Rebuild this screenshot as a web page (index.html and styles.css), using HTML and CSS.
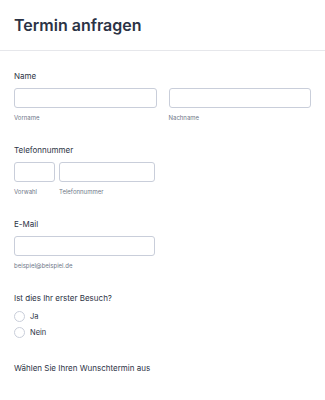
FILE: index.html
```html
<!DOCTYPE html>
<html lang="de">

<head>
    <meta charset="UTF-8">
    <meta name="viewport" content="width=device-width, initial-scale=1.0">
    <title>Termin anfragen</title>
    <link rel="stylesheet" href="styles.css">
</head>

<body>
    <div class="header">
        <h1>Termin anfragen</h1>
    </div>

    <form class="form">
        <div class="field">
            <label class="label">Name</label>
            <div class="row">
                <div class="col">
                    <input type="text" class="input">
                    <span class="sublabel">Vorname</span>
                </div>
                <div class="col">
                    <input type="text" class="input">
                    <span class="sublabel">Nachname</span>
                </div>
            </div>
        </div>

        <div class="field">
            <label class="label">Telefonnummer</label>
            <div class="row phone">
                <div class="col area">
                    <input type="text" class="input">
                    <span class="sublabel">Vorwahl</span>
                </div>
                <div class="col number">
                    <input type="text" class="input">
                    <span class="sublabel">Telefonnummer</span>
                </div>
            </div>
        </div>

        <div class="field">
            <label class="label">E-Mail</label>
            <div class="col email">
                <input type="email" class="input">
                <span class="sublabel">beispiel@beispiel.de</span>
            </div>
        </div>

        <div class="field radios">
            <label class="label">Ist dies Ihr erster Besuch?</label>
            <div class="option"><span class="radio"></span>Ja</div>
            <div class="option"><span class="radio"></span>Nein</div>
        </div>

        <div class="field">
            <label class="label">Wählen Sie Ihren Wunschtermin aus</label>
        </div>
    </form>
</body>

</html>
```

FILE: styles.css
```css
body {
    font-family: Inter, "Noto Sans", sans-serif;
    background-color: #fff;
    color: #2c3345;
    margin: 0;
    padding: 0;
}

.header {
    padding: 13px 14px;
    border-bottom: 1px solid #e6e7eb;
}

h1 {
    margin: 0;
    font-size: 16px;
    line-height: 24px;
    font-weight: 600;
    color: #2c3345;
}

.form {
    padding: 19px 14px 0 14px;
}

.field {
    margin-bottom: 21px;
}

.label {
    display: block;
    font-size: 8px;
    line-height: 12px;
    font-weight: 400;
    margin-bottom: 6px;
}

.row {
    display: flex;
    gap: 12px;
}

.col {
    display: flex;
    flex-direction: column;
    flex: 1;
}

.phone {
    gap: 4px;
    width: 141px;
}

.phone .area {
    flex: 0 0 41px;
}

.email {
    width: 141px;
}

.input {
    box-sizing: border-box;
    height: 20px;
    width: 100%;
    margin: 0;
    padding: 0 6px;
    border: 1px solid #c9ceda;
    border-radius: 3px;
    background: #fff;
}

.sublabel {
    margin-top: 4px;
    font-size: 6px;
    line-height: 11px;
    color: #6f7889;
}

.radios {
    margin-bottom: 22px;
}

.radios .label {
    margin-bottom: 4px;
}

.option {
    display: flex;
    align-items: center;
    gap: 5px;
    height: 16px;
    font-size: 7.5px;
}

.radio {
    box-sizing: border-box;
    width: 11px;
    height: 11px;
    border: 1px solid #c9ceda;
    border-radius: 50%;
}
```
